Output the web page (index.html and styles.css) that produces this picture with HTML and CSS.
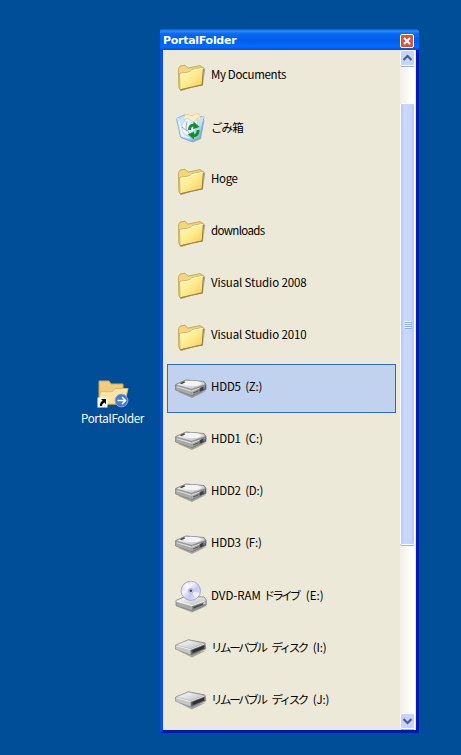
FILE: index.html
```html
<!DOCTYPE html>
<html lang="ja">
<head>
<meta charset="utf-8">
<title>PortalFolder</title>
<link rel="stylesheet" href="styles.css">
</head>
<body>
<svg class="defs" aria-hidden="true">
  <defs>
    <linearGradient id="gf" x1="0" y1="0" x2="1" y2="1"><stop offset="0" stop-color="#fffbc0"/><stop offset=".5" stop-color="#ffec8e"/><stop offset="1" stop-color="#efc75b"/></linearGradient>
    <linearGradient id="gt" x1="0" y1="0" x2="1" y2="1"><stop offset="0" stop-color="#fff"/><stop offset=".5" stop-color="#dedede"/><stop offset="1" stop-color="#b5b5b5"/></linearGradient>
    <linearGradient id="gs" x1="0" y1="0" x2="1" y2="0"><stop offset="0" stop-color="#b0b0b0"/><stop offset="1" stop-color="#5c5c5c"/></linearGradient>
    <linearGradient id="gd" x1="0" y1="0" x2="1" y2="1"><stop offset="0" stop-color="#bbb9dc"/><stop offset=".35" stop-color="#f4f4ff"/><stop offset=".6" stop-color="#c5c7fa"/><stop offset="1" stop-color="#eef0fc"/></linearGradient>
    <linearGradient id="gb" x1="0" y1="0" x2="1" y2="1"><stop offset="0" stop-color="#b9e1fb"/><stop offset=".5" stop-color="#d8eefb"/><stop offset="1" stop-color="#5c9ad6"/></linearGradient>
    <symbol id="folder" viewBox="0 0 32 32">
      <path d="M5 28.5 28 24.5 30 8 29 7 28 23 6 30Z" fill="#77715b" opacity=".65"/>
      <path d="M3.5 7.5 5 5.2 10 4.2 12.8 7.2 25 4.6 27.5 6V22L5 28.5 3.8 26Z" fill="#f4d779" stroke="#b99a4b" stroke-width=".8"/>
      <path d="M4.5 12.4 14.5 11 17 8.5 28.5 6.4 27.2 23.7 5 28.8Z" fill="url(#gf)" stroke="#c8a450" stroke-width=".8"/>
      <path d="M5.5 13.3 15 11.8 17.4 9.4 27.5 7.4" fill="none" stroke="#fffce0" stroke-width=".9"/>
      <path d="M5.2 28.8 27.2 23.9 28.4 8" fill="none" stroke="#8a6e2f" stroke-width=".8"/>
    </symbol>
    <symbol id="bin" viewBox="0 0 32 32">
      <path d="M6 25 18 29.5 26 26 29.5 7Z" fill="#7b8790" opacity=".6"/>
      <path d="M1.5 5.5 9 2 29 4 25 25 16 28.3 5.5 24Z" fill="url(#gb)" stroke="#6ea7d6" stroke-width=".8"/>
      <path d="M8 5 11 1.5 17 2.5 24 .5 26 7 17 11Z" fill="#ffeebb" stroke="#d8cc9c" stroke-width=".6"/>
      <path d="M7 11 12 5 18 9 23 5 22 15 13 23 7 19Z" fill="#f5f7ff" stroke="#b7c0df" stroke-width=".7"/>
      <path d="M12 8 11 15 14 20M7 14 12 18" fill="none" stroke="#9da6d3" stroke-width="1"/>
      <path d="M1.5 5.5 7 8 17 9.5 29 4.5" fill="none" stroke="#c8e7f8" stroke-width="1.2"/>
      <path d="M3.8 8 7.5 22.5 15 25" fill="none" stroke="#fff" stroke-width="1.3" opacity=".8"/>
      <path d="M14.5 17Q14.5 11.6 19.5 12" fill="none" stroke="#0e9426" stroke-width="3"/>
      <path d="M18.5 8.5 24.5 14 18.2 16.2Z" fill="#0e9426"/>
      <path d="M23.2 17Q23 23 18 22.6" fill="none" stroke="#0e9426" stroke-width="3"/>
      <path d="M19 18.8V26.4L12.7 21.2Z" fill="#0e9426"/>
    </symbol>
    <symbol id="hdd" viewBox="0 0 32 32">
      <path d="M2 18.5 17 25 31 18 17 21Z" fill="#77756d" opacity=".6"/>
      <path d="M.7 11.5 11 7 29 8.5 31 11.4V16.5L17 22.5.7 17Z" fill="#777" stroke="#6e6e6e" stroke-width=".7"/>
      <path d="M1 12 16.5 16.5V22.3L1 17Z" fill="#a8a8a8"/>
      <path d="M16.5 16.5 30.7 11.7V16.5L16.5 22.3Z" fill="url(#gs)"/>
      <path d="M1 11.7 11 7.2 28.7 8.8 30.5 11.4 16.5 16.2Z" fill="url(#gt)" stroke="#8c8c8c" stroke-width=".5"/>
      <ellipse cx="17.5" cy="10.5" rx="9" ry="2.8" fill="#f6f6f6" opacity=".9"/>
      <path d="M2 13.8 16.5 18.2 30 13" fill="none" stroke="#e6e6e6" stroke-width=".9"/>
      <path d="m5 10.3 4-2 1.4 1-4 2ZM24.8 14.9 29.2 13V16.7L24.8 18.7Z" fill="#404040"/>
      <path d="M29 13.5v2.8" stroke="#7886d9" stroke-width="1.2"/>
      <path d="m18 20 5-2" stroke="#4f4f4f" stroke-width=".9"/>
    </symbol>
    <symbol id="removable" viewBox="0 0 32 32">
      <path d="M3 17.5 17 24.5 31 17.5 17 20.5Z" fill="#77756d" opacity=".6"/>
      <path d="M.7 12 13.5 6.8 30 10 30.8 15.8 17 21.9.7 16.2Z" fill="#aaa" stroke="#777" stroke-width=".7"/>
      <path d="M1 12.6 15.5 16.2V21.4L1 16.2Z" fill="#c6c6c6"/>
      <path d="M15.5 16.2 29.8 10.9 30.3 15.7 16 21.7Z" fill="#696969"/>
      <path d="M17.5 17 29 12.5V15.4L17.5 20.2Z" fill="#303030"/>
      <path d="M1 12 13.5 7 29.5 10.4 15.5 15.9Z" fill="url(#gt)" stroke="#999" stroke-width=".5"/>
      <path d="M1.5 12.8 15.5 16.5 29.5 11" fill="none" stroke="#fff" stroke-width=".8"/>
    </symbol>
    <symbol id="dvd" viewBox="0 0 32 32">
      <path d="M3 26 17 31.5 32 25 17 27Z" fill="#77756d" opacity=".5"/>
      <path d="M1 19.5 10 15.5 29 16 31.3 19V24L17.5 29.9 1 24.7Z" fill="#aaa" stroke="#777" stroke-width=".7"/>
      <path d="M1 20 10 16 29 16.5 31 19.3 17 24.3Z" fill="url(#gt)"/>
      <path d="M17 24.3 31 19.5V23.7L17 29.5Z" fill="#858585"/>
      <path d="M1.5 20.3 17 24.6 30.5 19.8" fill="none" stroke="#fff"/>
      <path d="m18.5 26.7 9.5-3.6" stroke="#484848" stroke-width="1.5"/>
      <path d="M28.5 22.7 30.5 21.9" stroke="#efefef" stroke-width="1.3"/>
      <ellipse cx="15.8" cy="9.8" rx="9.7" ry="9.6" fill="url(#gd)" stroke="#9c9bb2" stroke-width=".8"/>
      <path d="M15.8 9.8 8 5.5A9 9 0 0 1 13 1.5ZM15.8 9.8 24.5 12A9 9 0 0 1 21 17.5Z" fill="#fff" opacity=".6"/>
      <circle cx="15.8" cy="9.8" r="2.6" fill="#d4d4dc" stroke="#a4a4b8" stroke-width=".6"/>
      <circle cx="15.8" cy="9.8" r="1.3" fill="#404048"/>
    </symbol>
  </defs>
</svg>
<div class="desktop">
  <div class="shortcut">
    <svg class="shortcut-icon" viewBox="0 0 32 28">
      <path d="M2 1H12L14 4H26V24H2Z" fill="#f2cc7d" stroke="#dba94e"/>
      <path d="M3 12H15L18 8.5H31L27.5 24H2Z" fill="#ffe3a0" stroke="#e3b35b"/>
      <path d="M4 13H15.5L18.5 9.8H29.5" fill="none" stroke="#fff2cb"/>
      <circle cx="24.5" cy="20.5" r="6.4" fill="#4779d0" stroke="#7fa5e2"/>
      <path d="M20.5 20.5H28M25 17 28.5 20.5 25 24" fill="none" stroke="#fff" stroke-width="1.6"/>
      <path d="M.5 17.5H10.5V27.5H.5Z" fill="#fff"/>
      <path d="M4 19H9V24L7.3 22.4Q5 23.6 5 26H3Q2.3 22.6 5.6 20.7Z" fill="#000"/>
    </svg>
    <span class="shortcut-label">PortalFolder</span>
  </div>
  <main class="window">
    <header class="title"><span class="title-text">PortalFolder</span>
      <svg class="close" viewBox="0 0 14 14"><rect x=".5" y=".5" width="13" height="13" rx="1.5" fill="#d95434" stroke="#fff"/><path d="m4 4 6 6M10 4l-6 6" stroke="#fff" stroke-width="2"/></svg>
    </header>
    <div class="body">
      <div class="list">
        <div class="row"><svg class="icon"><use href="#folder"/></svg><span class="label docs">My Documents</span></div>
        <div class="row"><svg class="icon"><use href="#bin"/></svg><span class="label trash">ごみ箱</span></div>
        <div class="row"><svg class="icon"><use href="#folder"/></svg><span class="label docs">Hoge</span></div>
        <div class="row"><svg class="icon"><use href="#folder"/></svg><span class="label downloads">downloads</span></div>
        <div class="row"><svg class="icon"><use href="#folder"/></svg><span class="label studio">Visual Studio 2008</span></div>
        <div class="row"><svg class="icon"><use href="#folder"/></svg><span class="label studio">Visual Studio 2010</span></div>
        <div class="row selected"><svg class="icon"><use href="#hdd"/></svg><span class="label drive">HDD5 (Z:)</span></div>
        <div class="row"><svg class="icon"><use href="#hdd"/></svg><span class="label drive">HDD1 (C:)</span></div>
        <div class="row"><svg class="icon"><use href="#hdd"/></svg><span class="label drive">HDD2 (D:)</span></div>
        <div class="row"><svg class="icon"><use href="#hdd"/></svg><span class="label drive">HDD3 (F:)</span></div>
        <div class="row"><svg class="icon"><use href="#dvd"/></svg><span class="label ram">DVD-RAM <span class="kana">ドライブ</span>  (E:)</span></div>
        <div class="row"><svg class="icon"><use href="#removable"/></svg><span class="label disk"><span class="kana">リムーバブル</span> <span class="kana">ディスク</span> (I:)</span></div>
        <div class="row"><svg class="icon"><use href="#removable"/></svg><span class="label disk"><span class="kana">リムーバブル</span> <span class="kana">ディスク</span> (J:)</span></div>
      </div>
      <div class="scrollbar">
        <svg class="arrow" viewBox="0 0 15 17"><rect x=".5" y=".5" width="14" height="15" rx="1.5" fill="#c4d4fd" stroke="#fff"/><path d="M1 16.5H14" stroke="#9ab5e8"/><path d="m3.5 10 4-4 4 4" fill="none" stroke="#4d6185" stroke-width="2.2"/></svg>
        <div class="thumb"><i></i><i></i><i></i><i></i></div>
        <svg class="arrow" viewBox="0 0 15 17"><rect x=".5" y=".5" width="14" height="15" rx="1.5" fill="#c4d4fd" stroke="#fff"/><path d="M1 16.5H14" stroke="#9ab5e8"/><path d="m3.5 6 4 4 4-4" fill="none" stroke="#4d6185" stroke-width="2.2"/></svg>
      </div>
    </div>
  </main>
</div>
</body>
</html>
```
FILE: styles.css
```css
* { box-sizing: border-box; }
body { margin: 0; background: #004e98; font: 11.5px/16px "Noto Sans CJK JP", sans-serif; color: #000; }
.defs { display: block; width: 0; height: 0; }
.desktop { display: flex; align-items: flex-start; width: 461px; height: 755px; overflow: hidden; padding-top: 29px; }
.shortcut { width: 95px; margin: 351px 0 0 65px; display: flex; flex-direction: column; align-items: center; color: #fff; }
.shortcut-icon { width: 32px; height: 28px; }
.shortcut-label { margin-top: 2px; white-space: nowrap; letter-spacing: -.3px; }
.window { width: 259px; height: 704px; border: 3px solid #0831d9; border-top: 0; border-left-color: #0a50e4; border-right-color: #0019b0; border-bottom-color: #0019ae; }
.title { height: 21px; margin: 0 -3px; padding: 2px 5px 0 3px; display: flex; align-items: center; justify-content: space-between; border-radius: 2px 2px 0 0; background: linear-gradient(#0753cf, #2b8bff 2px, #0868ee 5px, #005eea 12px, #006cff 18px, #004bdc); }
.title-text { color: #fff; font: bold 11px/16px "DejaVu Sans", sans-serif; letter-spacing: -.28px; }
.close { width: 14px; height: 14px; }
.body { height: 680px; display: flex; background: #ece9d8; }
.list { width: 237px; padding: 2px 4px 0; display: flex; flex-direction: column; gap: 3px; }
.row { flex: none; height: 49px; border: 1px solid transparent; padding: 0 7px; display: flex; align-items: center; gap: 4px; }
.selected { background: #c1d2ee; border-color: #316ac5; }
.icon { width: 32px; height: 32px; flex: none; }
.label { white-space: pre; padding-bottom: 5px; }
.docs { letter-spacing: -.35px; }
.trash { padding-bottom: 3px; letter-spacing: -.9px; }
.downloads { letter-spacing: -.65px; }
.studio { letter-spacing: -.12px; }
.drive { letter-spacing: -.2px; word-spacing: 2px; }
.ram, .disk { padding-bottom: 3px; }
.kana { letter-spacing: -2.7px; margin-right: 2px; }
.disk .kana { letter-spacing: -2.4px; }
.disk { word-spacing: 1.5px; letter-spacing: -.2px; }
.scrollbar { width: 15px; display: flex; flex-direction: column; background: linear-gradient(90deg, #f1efe6, #fefefb 70%); }
.arrow { width: 15px; height: 17px; flex: none; }
.arrow:last-child { margin-top: auto; }
.thumb { height: 442px; margin-top: 36px; border: 1px solid #fff; border-radius: 2px; background: linear-gradient(90deg, #b4c8f6, #c9d8fe 25%, #c5d5fd 75%, #b2c7f5); box-shadow: 0 1px #9ab5e8; display: flex; flex-direction: column; align-items: center; justify-content: center; gap: 1px; }
.thumb i { width: 7px; height: 1px; background: #eef4fe; box-shadow: 1px 1px #8cb0f8; }
```
